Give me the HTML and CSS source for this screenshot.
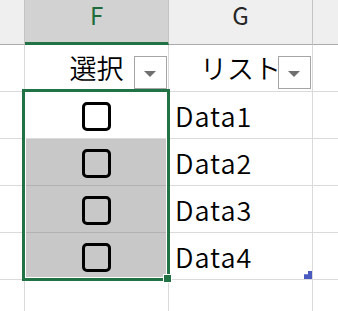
FILE: index.html
```html
<html>
<head>
    <link rel="stylesheet" href="styles.css">
</head>
<body>
    <div class="sheet">
        <div class="cell head gutter"></div>
        <div class="cell head active">F</div>
        <div class="cell head">G</div>
        <div class="cell head rest"></div>

        <div class="cell gutter"></div>
        <div class="cell title">選択<span class="filter"></span></div>
        <div class="cell title">リスト<span class="filter"></span></div>
        <div class="cell rest"></div>

        <div class="cell gutter"></div>
        <div class="cell check"><span class="box"></span></div>
        <div class="cell data">Data1</div>
        <div class="cell rest"></div>

        <div class="cell gutter"></div>
        <div class="cell check filled"><span class="box"></span></div>
        <div class="cell data">Data2</div>
        <div class="cell rest"></div>

        <div class="cell gutter"></div>
        <div class="cell check filled"><span class="box"></span></div>
        <div class="cell data">Data3</div>
        <div class="cell rest"></div>

        <div class="cell gutter"></div>
        <div class="cell check filled"><span class="box"></span></div>
        <div class="cell data">Data4<span class="resize"></span></div>
        <div class="cell rest"></div>

        <div class="cell gutter"></div>
        <div class="cell"></div>
        <div class="cell"></div>
        <div class="cell rest"></div>

        <div class="selection"><span class="handle"></span></div>
    </div>
</body>
</html>
```

FILE: styles.css
```css
body {
    margin: 0;
    background: #fff;
    font-family: "Noto Sans CJK JP", "Noto Sans", sans-serif;
    overflow: hidden;
}
.sheet {
    position: relative;
    display: grid;
    grid-template-columns: 25px 144px 144px 40px;
    grid-template-rows: 45px repeat(5, 47px) 40px;
    height: 311px;
    overflow: hidden;
}
.cell {
    position: relative;
    box-sizing: border-box;
    border-right: 1px solid #dadada;
    border-bottom: 1px solid #dadada;
    color: #000;
}
.head {
    background: #efefef;
    border-right: 1px solid #c4c4c4;
    border-bottom: 1px solid #ababab;
    font-size: 24px;
    line-height: 30px;
    color: #262626;
    text-align: center;
}
.head.active {
    background: #d2d2d2;
    color: #1f6b3c;
    border-bottom: 3px solid #217346;
}
.rest {
    border-right: none;
}
.title {
    display: flex;
    align-items: center;
    justify-content: center;
    font-size: 27px;
    font-weight: 350;
    padding-bottom: 2px;
}
.filter {
    position: absolute;
    right: 1px;
    bottom: 2px;
    width: 33px;
    height: 33px;
    box-sizing: border-box;
    border: 1px solid #a6a6a6;
    background: #fff;
}
.filter::after {
    content: "";
    position: absolute;
    left: 9px;
    top: 14px;
    border-left: 6px solid transparent;
    border-right: 6px solid transparent;
    border-top: 6px solid #6f6f6f;
}
.check {
    display: flex;
    align-items: center;
    justify-content: center;
}
.filled {
    background: #c8c8c8;
    border-bottom-color: #b2b2b2;
}
.box {
    width: 29px;
    height: 29px;
    box-sizing: border-box;
    border: 3px solid #000;
    border-radius: 5px;
    margin-top: 3px;
}
.data {
    display: flex;
    align-items: center;
    font-size: 27px;
    font-weight: 350;
    letter-spacing: 1px;
    padding-left: 6px;
    padding-top: 1px;
}
.resize {
    position: absolute;
    right: 0;
    bottom: 0;
    width: 8px;
    height: 8px;
    background: #4a5ac0;
    clip-path: polygon(50% 0, 100% 0, 100% 100%, 0 100%, 0 40%, 50% 40%);
}
.selection {
    position: absolute;
    left: 22px;
    top: 89px;
    width: 148px;
    height: 192px;
    box-sizing: border-box;
    border: 3px solid #217346;
    box-shadow: inset 0 0 0 1px #fff;
}
.handle {
    position: absolute;
    right: -5px;
    bottom: -5px;
    width: 7px;
    height: 7px;
    background: #217346;
    border: 1px solid #fff;
}
```
